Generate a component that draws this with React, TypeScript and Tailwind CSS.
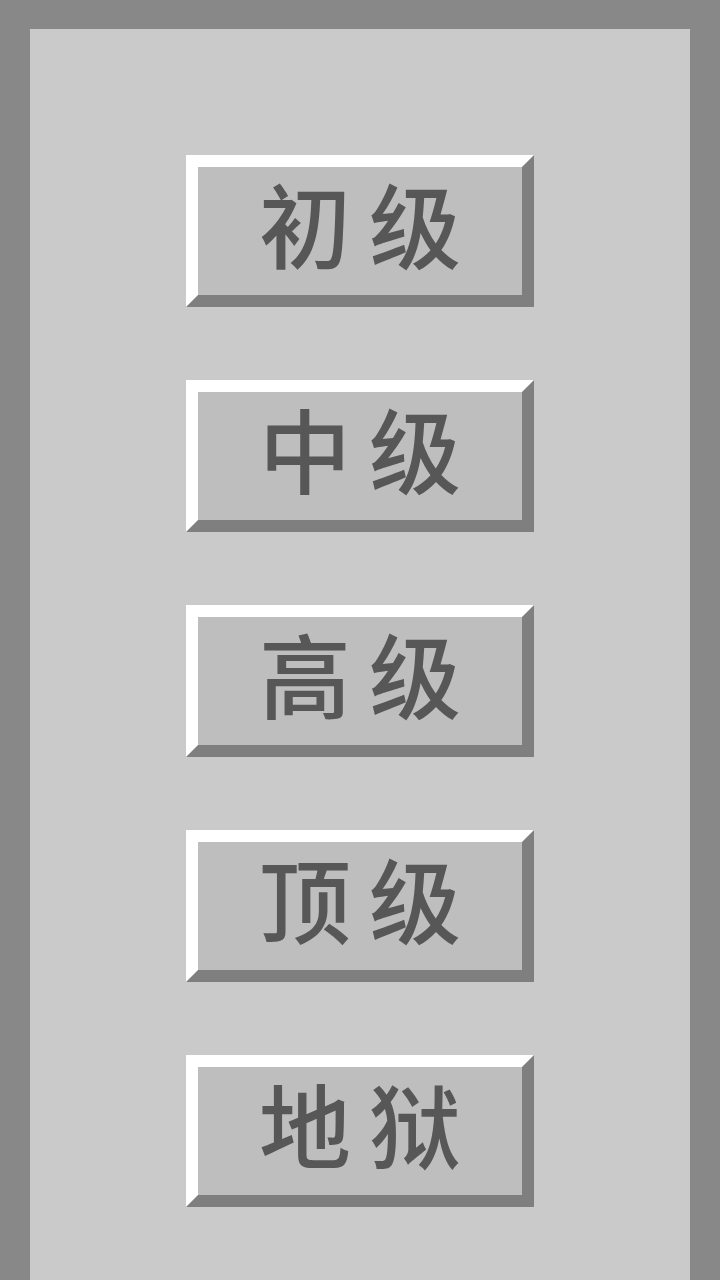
import React from "react";

const levels = ["初级", "中级", "高级", "顶级", "地狱"];

export default function App() {
  return (
    <div className="w-[720px] h-[1280px] overflow-hidden bg-[#888888] pt-[29px] px-[30px]">
      <div className="h-[1300px] bg-[#cacaca] flex flex-col items-center pt-[126px] gap-[73px]">
        {levels.map((l) => (
          <button
            key={l}
            className="w-[348px] h-[152px] shrink-0 border-[12px] border-t-white border-l-white border-r-[#7f7f7f] border-b-[#7f7f7f] bg-[#bebebe] flex items-center justify-center text-[#575757] text-[92px] font-medium leading-none tracking-[18px] pl-[18px] pb-[18px]"
            style={{ fontFamily: '"Noto Sans CJK SC", sans-serif' }}
          >
            {l}
          </button>
        ))}
      </div>
    </div>
  );
}
